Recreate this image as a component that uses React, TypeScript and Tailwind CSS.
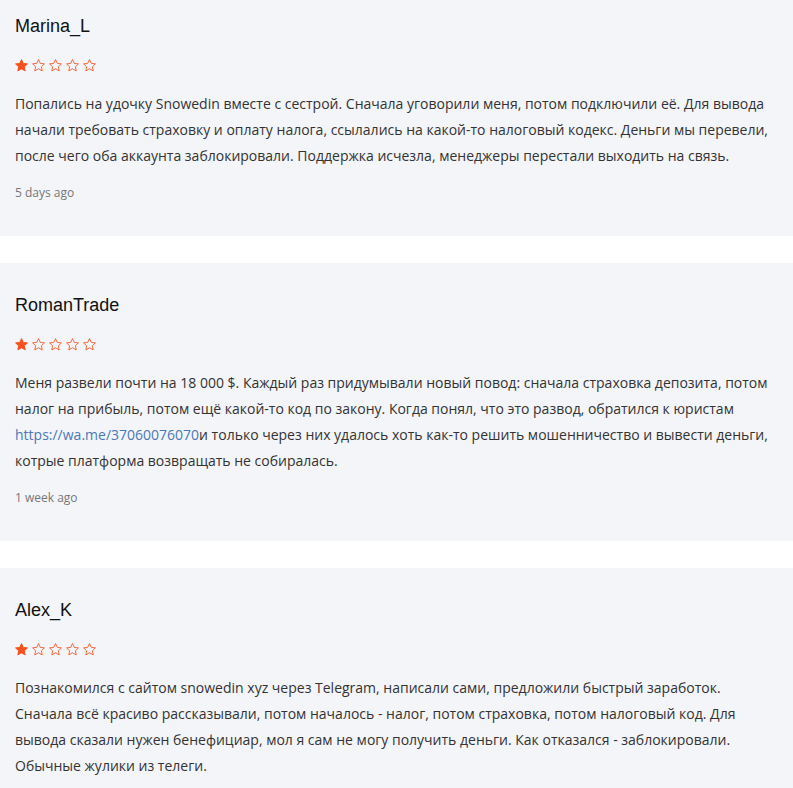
const reviews = [
  {
    name: 'Marina_L',
    text: (
      <>
        Попались на удочку Snowedin вместе с сестрой. Сначала уговорили меня, потом подключили её. Для вывода начали требовать страховку и оплату налога, ссылались на какой-то налоговый кодекс. Деньги мы перевели, после чего оба аккаунта заблокировали. Поддержка исчезла, менеджеры перестали выходить на связь.
      </>
    ),
    time: '5 days ago',
  },
  {
    name: 'RomanTrade',
    text: (
      <>
        Меня развели почти на 18 000 $. Каждый раз придумывали новый повод: сначала страховка депозита, потом налог на прибыль, потом ещё какой-то код по закону. Когда понял, что это развод, обратился к юристам{' '}
        <a href="#" className="text-[#4a78b8]">https://wa.me/37060076070</a>и только через них удалось хоть как-то решить мошенничество и вывести деньги, котрые платформа возвращать не собиралась.
      </>
    ),
    time: '1 week ago',
  },
  {
    name: 'Alex_K',
    text: (
      <>
        Познакомился с сайтом snowedin xyz через Telegram, написали сами, предложили быстрый заработок. Сначала всё красиво рассказывали, потом началось - налог, потом страховка, потом налоговый код. Для вывода сказали нужен бенефициар, мол я сам не могу получить деньги. Как отказался - заблокировали. Обычные жулики из телеги.
      </>
    ),
    time: '',
  },
];

function Star({ filled }: { filled: boolean }) {
  return (
    <svg width="15" height="15" viewBox="0 0 24 24" className="shrink-0">
      <path
        d="M12 2.5l2.9 6.1 6.6.8-4.9 4.6 1.3 6.6L12 17.3l-5.9 3.3 1.3-6.6-4.9-4.6 6.6-.8z"
        fill={filled ? '#f4511e' : 'none'}
        stroke="#f4511e"
        strokeWidth={filled ? 1.5 : 1.6}
        strokeLinejoin="round"
        opacity={filled ? 1 : 0.85}
      />
    </svg>
  );
}

export default function App() {
  return (
    <div className="w-[793px] h-[788px] overflow-hidden bg-white">
      <div className="flex flex-col gap-[27px] -mt-[16px]">
        {reviews.map((r) => (
          <div key={r.name} className="bg-[#f3f5f9] px-[15px] pt-[30px] pb-[34px]">
            <div className="text-[18px] leading-[24px] text-[#111] font-['Liberation_Sans',Arial,sans-serif]">
              {r.name}
            </div>
            <div className="flex gap-[2px] mt-[20px] ml-[-1px]">
              {[0, 1, 2, 3, 4].map((i) => (
                <Star key={i} filled={i === 0} />
              ))}
            </div>
            <p className="mt-[18px] text-[14px] leading-[26px] text-[#333] font-['Open_Sans',sans-serif]">
              {r.text}
            </p>
            {r.time && (
              <div className="mt-[15px] text-[12px] leading-[18px] text-[#777] font-['Open_Sans',sans-serif]">
                {r.time}
              </div>
            )}
          </div>
        ))}
      </div>
    </div>
  );
}
